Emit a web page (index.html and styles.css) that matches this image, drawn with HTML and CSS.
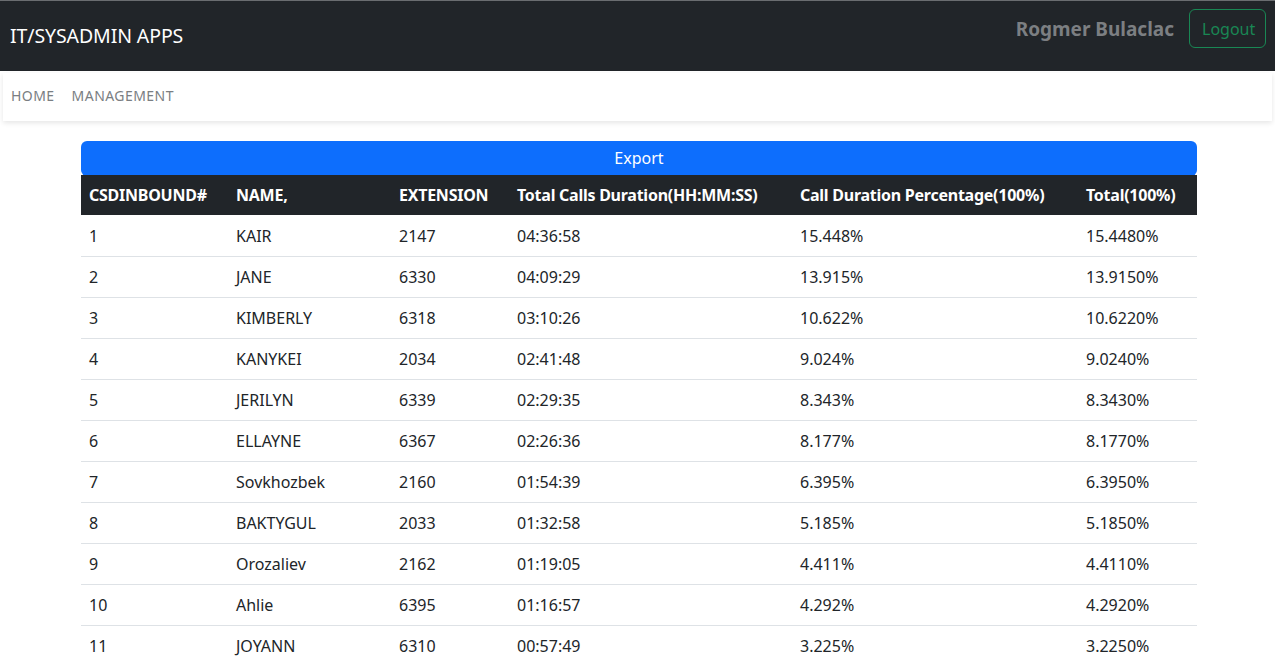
FILE: index.html
```html
<!DOCTYPE html>
<html lang="en">
<head>
<meta charset="utf-8">
<title>IT/SYSADMIN APPS</title>
<link rel="stylesheet" href="styles.css">
</head>
<body>
<header class="topbar">
  <a class="brand" href="#">IT/SYSADMIN APPS</a>
  <div class="user">
    <span class="user-name">Rogmer Bulaclac</span>
    <button class="btn-logout" type="button">Logout</button>
  </div>
</header>
<nav class="subnav">
  <a class="subnav-link" href="#">HOME</a>
  <a class="subnav-link" href="#">MANAGEMENT</a>
</nav>
<main class="content">
  <button class="btn-export" type="button">Export</button>
  <table class="report">
    <colgroup>
      <col class="c1"><col class="c2"><col class="c3"><col class="c4"><col class="c5"><col class="c6">
    </colgroup>
    <thead>
      <tr>
        <th>CSDINBOUND#</th>
        <th>NAME,</th>
        <th>EXTENSION</th>
        <th>Total Calls Duration(HH:MM:SS)</th>
        <th>Call Duration Percentage(100%)</th>
        <th>Total(100%)</th>
      </tr>
    </thead>
    <tbody>
      <tr><td>1</td><td>KAIR</td><td>2147</td><td>04:36:58</td><td>15.448%</td><td>15.4480%</td></tr>
      <tr><td>2</td><td>JANE</td><td>6330</td><td>04:09:29</td><td>13.915%</td><td>13.9150%</td></tr>
      <tr><td>3</td><td>KIMBERLY</td><td>6318</td><td>03:10:26</td><td>10.622%</td><td>10.6220%</td></tr>
      <tr><td>4</td><td>KANYKEI</td><td>2034</td><td>02:41:48</td><td>9.024%</td><td>9.0240%</td></tr>
      <tr><td>5</td><td>JERILYN</td><td>6339</td><td>02:29:35</td><td>8.343%</td><td>8.3430%</td></tr>
      <tr><td>6</td><td>ELLAYNE</td><td>6367</td><td>02:26:36</td><td>8.177%</td><td>8.1770%</td></tr>
      <tr><td>7</td><td>Sovkhozbek</td><td>2160</td><td>01:54:39</td><td>6.395%</td><td>6.3950%</td></tr>
      <tr><td>8</td><td>BAKTYGUL</td><td>2033</td><td>01:32:58</td><td>5.185%</td><td>5.1850%</td></tr>
      <tr><td>9</td><td>Orozaliev</td><td>2162</td><td>01:19:05</td><td>4.411%</td><td>4.4110%</td></tr>
      <tr><td>10</td><td>Ahlie</td><td>6395</td><td>01:16:57</td><td>4.292%</td><td>4.2920%</td></tr>
      <tr><td>11</td><td>JOYANN</td><td>6310</td><td>00:57:49</td><td>3.225%</td><td>3.2250%</td></tr>
    </tbody>
  </table>
</main>
</body>
</html>
```

FILE: styles.css
```css
* { box-sizing: border-box; }

html, body {
  margin: 0;
  padding: 0;
  background: #fff;
  overflow: hidden;
}

body {
  font-family: "Noto Sans", "DejaVu Sans", sans-serif;
  font-size: 16px;
  line-height: 1.5;
  color: #212529;
  height: 660px;
}

.topbar {
  height: 71px;
  background: #212529;
  border-top: 1px solid #6a6d70;
  display: flex;
  align-items: flex-start;
  justify-content: space-between;
  padding: 0 9px 0 10px;
}

.brand {
  color: #fff;
  text-decoration: none;
  font-size: 19.5px;
  line-height: 30px;
  margin-top: 20px;
  letter-spacing: -0.1px;
}

.user {
  display: flex;
  align-items: center;
  gap: 15px;
  margin-top: 8px;
}

.user-name {
  color: #7c7f82;
  font-weight: 700;
  font-size: 19px;
  line-height: 30px;
}

.btn-logout {
  font-family: inherit;
  font-size: 16px;
  line-height: 24px;
  color: #198754;
  background: transparent;
  border: 1px solid #198754;
  border-radius: 6px;
  padding: 6px 12px;
  height: 39px;
  width: 77px;
}

.subnav {
  margin: 2px 3px 0 3px;
  height: 48px;
  background: #fff;
  box-shadow: 0 2px 5px rgba(0, 0, 0, 0.1);
  display: flex;
  align-items: center;
  gap: 17px;
  padding: 0 8px 4px;
}

.subnav-link {
  color: #7a7e82;
  text-decoration: none;
  font-size: 14px;
  letter-spacing: 0.45px;
}

.content {
  width: 1116px;
  margin: 20px 0 0 81px;
}

.btn-export {
  display: block;
  width: 100%;
  height: 35px;
  margin: 0 0 -1px 0;
  font-family: inherit;
  font-size: 16px;
  line-height: 24px;
  color: #fff;
  background: #0d6efd;
  border: 0;
  border-radius: 6px;
  padding: 4px 0 6px;
  position: relative;
}

.report {
  width: 100%;
  border-collapse: collapse;
  table-layout: fixed;
  position: relative;
}

.c1 { width: 147px; }
.c2 { width: 163px; }
.c3 { width: 118px; }
.c4 { width: 283px; }
.c5 { width: 286px; }
.c6 { width: 119px; }

.report th {
  background: #212529;
  color: #fff;
  font-weight: 700;
  text-align: left;
  padding: 8px;
  height: 40px;
  white-space: nowrap;
  letter-spacing: -0.25px;
}

.report td {
  padding: 8.5px 8px 7.5px;
  height: 41px;
  line-height: 24px;
  border-bottom: 1px solid #dee2e6;
  white-space: nowrap;
}
```
